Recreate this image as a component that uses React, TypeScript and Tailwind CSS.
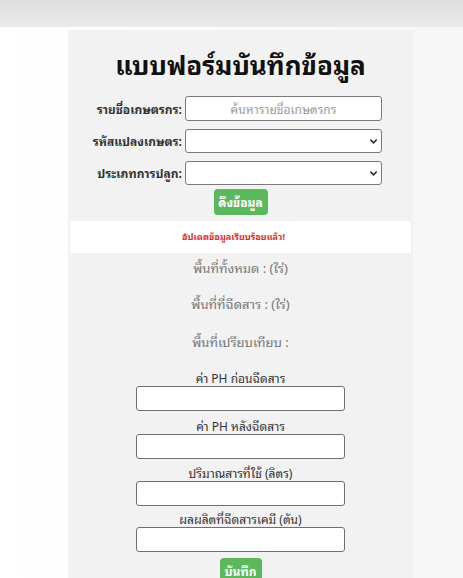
import React from "react";

const ChevronDown = () => (
	<svg width="9" height="9" viewBox="0 0 10 10" className="shrink-0">
		<path d="M2 3.5 L5 6.5 L8 3.5" fill="none" stroke="#333" strokeWidth="1.8" strokeLinecap="round" />
	</svg>
);

function LabelRow({ label, children }: { label: string; children: React.ReactNode }) {
	return (
		<div className="flex items-center">
			<label className="w-[116px] pr-[3px] text-right text-[12px] font-bold text-[#333]">
				{label}
			</label>
			{children}
		</div>
	);
}

function SelectBox() {
	return (
		<div className="flex h-[24px] w-[197px] items-center justify-end rounded-[3px] border border-[#7a7a7a] bg-white pr-[3px]">
			<ChevronDown />
		</div>
	);
}

function Field({ label, className }: { label: string; className?: string }) {
	return (
		<div className={`flex flex-col items-center ${className ?? ""}`}>
			<div className="h-[16px] text-[12px] leading-[16px] text-[#333]">{label}</div>
			<input
				type="text"
				className="h-[25px] w-[209px] rounded-[3px] border border-[#6f6f6f] bg-white"
			/>
		</div>
	);
}

export default function App() {
	return (
		<div className="h-[578px] w-[463px] overflow-hidden bg-gradient-to-r from-white via-[#fbfbfb] to-[#f6f6f6] font-['Tahoma','Noto_Sans_Thai_Looped','Noto_Sans_Thai','Noto_Sans',sans-serif]">
			<div className="h-[27px] bg-gradient-to-b from-[#dedede] to-[#ebebeb]" />
			<div className="ml-[68px] mt-[3px] flex h-[600px] w-[345px] flex-col items-center rounded-t-[4px] bg-[#f2f2f2] pt-[15px]">
				<h1 className="h-[36px] text-[26px] font-bold leading-[36px] text-[#111]">
					แบบฟอร์มบันทึกข้อมูล
				</h1>
				<div className="mt-[15px] flex w-full flex-col gap-[8px] pl-[1px]">
					<LabelRow label="รายชื่อเกษตรกร:">
						<input
							type="text"
							placeholder="ค้นหารายชื่อเกษตรกร"
							className="h-[25px] w-[197px] rounded-[3px] border border-[#7a7a7a] bg-white text-center text-[12px] placeholder:text-[#999]"
						/>
					</LabelRow>
					<LabelRow label="รหัสแปลงเกษตร:">
						<SelectBox />
					</LabelRow>
					<LabelRow label="ประเภทการปลูก:">
						<SelectBox />
					</LabelRow>
				</div>
				<button className="mt-[4px] h-[26px] w-[54px] rounded-[4px] bg-[#5cb85c] text-[12px] font-bold text-white">
					ดึงข้อมูล
				</button>
				<div className="mt-[6px] flex h-[32px] w-[341px] items-center justify-center bg-white pr-[14px] text-[9px] font-bold text-[#d9302b]">
					อัปเดตข้อมูลเรียบร้อยแล้ว!
				</div>
				<div className="mt-[5px] h-[20px] text-[13px] leading-[20px] text-[#777]">
					พื้นที่ทั้งหมด : (ไร่)
				</div>
				<div className="mt-[16px] h-[20px] text-[13px] leading-[20px] text-[#777]">
					พื้นที่ที่ฉีดสาร : (ไร่)
				</div>
				<div className="mt-[18px] h-[20px] text-[13px] leading-[20px] text-[#777]">
					พื้นที่เปรียบเทียบ :
				</div>
				<Field label="ค่า PH ก่อนฉีดสาร" className="mt-[18px]" />
				<Field label="ค่า PH หลังฉีดสาร" className="mt-[7px]" />
				<Field label="ปริมาณสารที่ใช้ (ลิตร)" className="mt-[6px]" />
				<Field label="ผลผลิตที่ฉีดสารเคมี (ตัน)" className="mt-[5px]" />
				<button className="mt-[6px] h-[26px] w-[42px] rounded-[4px] bg-[#5cb85c] text-[12px] font-bold text-white">
					บันทึก
				</button>
			</div>
		</div>
	);
}
